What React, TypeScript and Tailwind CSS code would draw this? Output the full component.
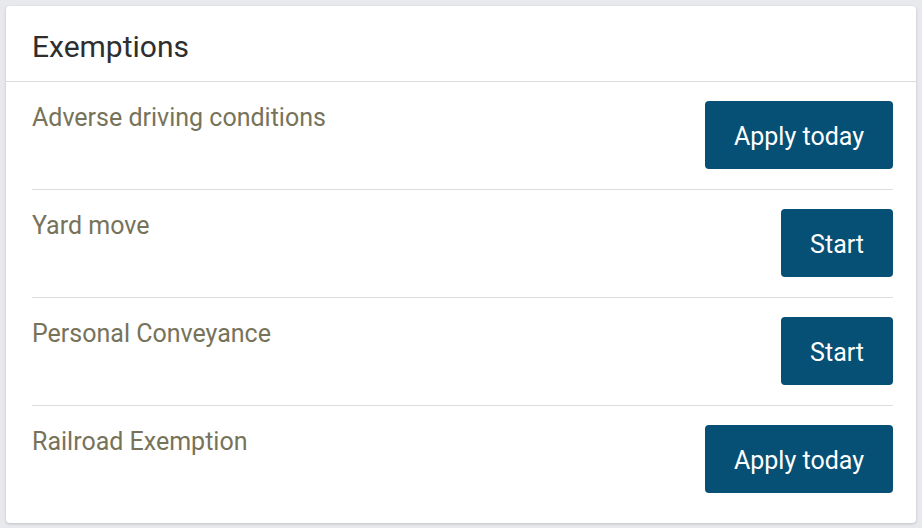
import React from 'react';

interface Exemption {
  label: string;
  action: string;
}

const exemptions: Exemption[] = [
  { label: 'Adverse driving conditions', action: 'Apply today' },
  { label: 'Yard move', action: 'Start' },
  { label: 'Personal Conveyance', action: 'Start' },
  { label: 'Railroad Exemption', action: 'Apply today' },
];

export default function App() {
  return (
    <div className="w-[922px] h-[528px] bg-[#e8e9ec] p-[6px] font-['Roboto',_'Liberation_Sans',_sans-serif]">
      <div className="w-[910px] h-[517px] bg-white rounded-[4px] shadow-[0_1px_3px_rgba(0,0,0,0.18)] flex flex-col">
        {/* Card header */}
        <div className="h-[76px] flex items-center px-[26px] border-b border-[#dcdcdc]">
          <h2 className="text-[30px] text-[#2e2e2e] leading-none pt-[6px]">Exemptions</h2>
        </div>

        {/* Rows */}
        <div className="pl-[26px] pr-[23px]">
          {exemptions.map((item, i) => (
            <div
              key={item.label}
              className={`flex items-start justify-between pt-[19px] pb-[20px] ${
                i < exemptions.length - 1 ? 'border-b border-[#dcdcdc]' : ''
              }`}
            >
              <span className="text-[25px] leading-[32px] text-[#77735a] pt-[1px]">{item.label}</span>
              <button className="h-[68px] px-[29px] pt-[3px] rounded-[4px] bg-[#064f75] text-white text-[25px]">
                {item.action}
              </button>
            </div>
          ))}
        </div>
      </div>
    </div>
  );
}
